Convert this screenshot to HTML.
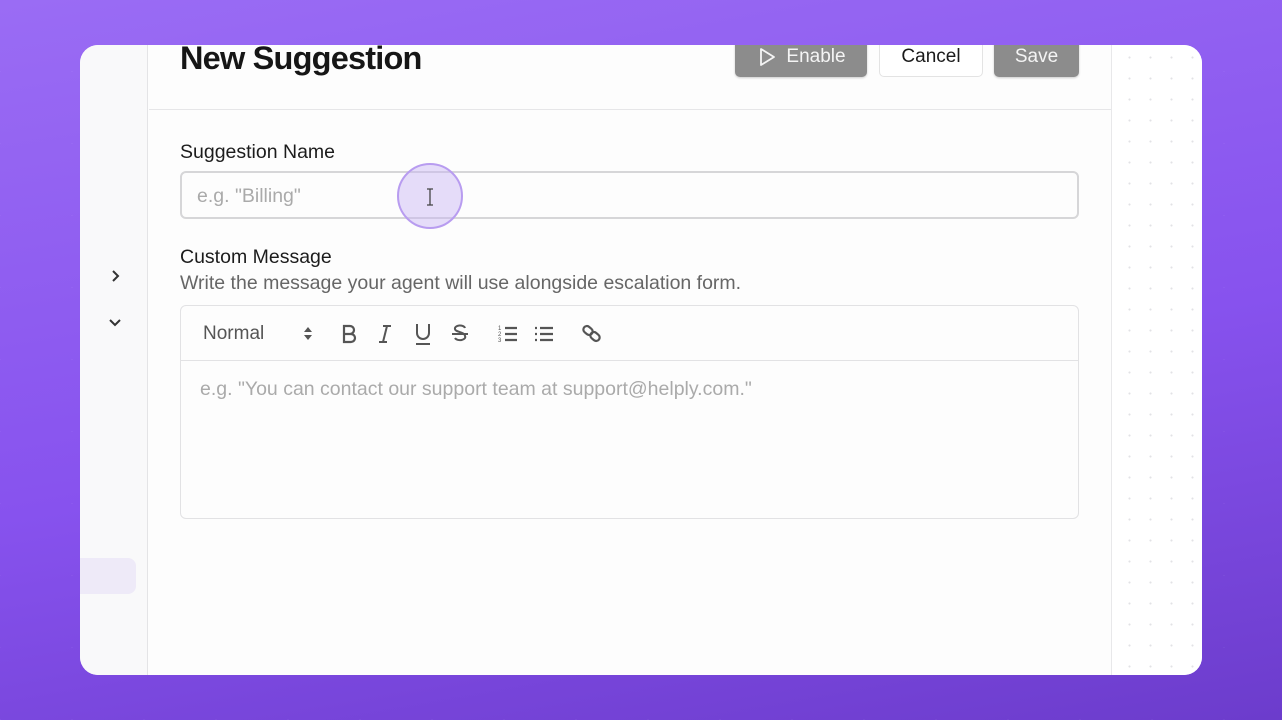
<!DOCTYPE html>
<html><head><style>
*{margin:0;padding:0;box-sizing:border-box}
body{width:1282px;height:720px;overflow:hidden;font-family:"Liberation Sans",sans-serif;
background:linear-gradient(170deg,#9a6cf4 0%,#8752ee 55%,#6c3ccc 100%);position:relative}
.pat{position:absolute;inset:0;background-image:linear-gradient(45deg,rgba(255,255,255,.05) 1px,transparent 1px),linear-gradient(-45deg,rgba(255,255,255,.05) 1px,transparent 1px);background-size:72px 72px;}
.card{position:absolute;left:80px;top:45px;width:1122px;height:630px;background:#fdfdfd;border-radius:18px;overflow:hidden}
.side{position:absolute;left:0;top:0;width:68px;height:630px;background:#f9f9fa;border-right:1px solid #e4e4e6}
.right{position:absolute;left:1031px;top:0;width:91px;height:630px;border-left:1px solid #e8e8ea;background-color:#fff;
background-image:radial-gradient(circle,#e2e2e5 0.9px,transparent 1.2px);background-size:21px 21px;background-position:7px 2px}
.hdr{position:absolute;left:69px;top:0;width:962px;height:65px;border-bottom:1px solid #e6e6e8}
h1{position:absolute;left:31px;top:-5px;font-size:32.5px;font-weight:bold;color:#161616;letter-spacing:-0.8px}
.btn{position:absolute;top:-8px;height:40px;border-radius:5px;font-size:19px;display:flex;align-items:center;justify-content:center}
.g{background:#8c8c8c;color:#f4f4f4;box-shadow:0 1px 2px rgba(0,0,0,.2)}
.w{background:#fff;border:1px solid #e3e3e3;color:#1a1a1a}
.lbl{position:absolute;left:100px;font-size:19.5px;color:#1c1c1c}
.inp{position:absolute;left:100px;top:126px;width:899px;height:48px;border:2px solid #d6d6d8;border-radius:6px;background:#fdfdfd;font-size:19.5px;color:#aaa;padding:12px 15px}
.ed{position:absolute;left:100px;top:260px;width:899px;height:214px;border:1px solid #e2e2e4;border-radius:6px}
.tb{height:55px;border-bottom:1px solid #e2e2e4;position:relative;color:#555}
.tb span{position:absolute;top:17px;font-size:19px}
</style></head><body><div class="pat"></div>
<div class="card">
<div class="side">
<svg style="position:absolute;left:30px;top:224px" width="12" height="14"><path d="M3 2l5 5-5 5" fill="none" stroke="#333" stroke-width="2"/></svg>
<svg style="position:absolute;left:28px;top:272px" width="14" height="12"><path d="M2 3l5 5 5-5" fill="none" stroke="#333" stroke-width="2"/></svg>
<div style="position:absolute;left:0;top:513px;width:56px;height:36px;background:#eeeaf8;border-radius:0 8px 8px 0"></div>
</div>
<div class="right"></div>
<div class="hdr">
<h1>New Suggestion</h1>
<div class="btn g" style="left:586px;width:132px"><svg width="22" height="22" style="margin-right:8px"><path d="M5 3l13 8-13 8z" fill="none" stroke="#f4f4f4" stroke-width="1.8" stroke-linejoin="round"/></svg>Enable</div>
<div class="btn w" style="left:730px;width:104px">Cancel</div>
<div class="btn g" style="left:845px;width:85px">Save</div>
</div>
<div class="lbl" style="top:96px">Suggestion Name</div>
<div class="inp">e.g. "Billing"</div>
<div class="lbl" style="top:201px">Custom Message</div>
<div class="lbl" style="top:227px;color:#666">Write the message your agent will use alongside escalation form.</div>
<div class="ed"><div class="tb">
<span style="left:22px">Normal</span>
<svg style="position:absolute;left:122px;top:20px" width="10" height="15"><path d="M1 6l4-5 4 5zM1 9l4 5 4-5z" fill="#555"/></svg>
<svg style="position:absolute;left:160px;top:18px" width="16" height="20"><path d="M3 2h6a4 4 0 010 8H3zM3 10h7a4 4 0 010 8H3z" fill="none" stroke="#555" stroke-width="2.2"/></svg>
<svg style="position:absolute;left:196px;top:18px" width="16" height="20"><path d="M6 2h8M2 18h8M10 2L6 18" fill="none" stroke="#555" stroke-width="2"/></svg>
<svg style="position:absolute;left:233px;top:16px" width="18" height="24"><path d="M3 2v9a6 6 0 0012 0V2M2 22h14" fill="none" stroke="#555" stroke-width="2"/></svg>
<svg style="position:absolute;left:270px;top:18px" width="18" height="20"><path d="M14 4a5 3 0 00-10 1c0 3 10 3 10 7a5 3 0 01-10 2M1 10h16" fill="none" stroke="#555" stroke-width="2"/></svg>
<svg style="position:absolute;left:317px;top:18px" width="20" height="20"><path d="M7 4h12M7 10h12M7 16h12" stroke="#555" stroke-width="2.2"/><text x="0" y="6" font-size="6" fill="#555">1</text><text x="0" y="12" font-size="6" fill="#555">2</text><text x="0" y="18" font-size="6" fill="#555">3</text></svg>
<svg style="position:absolute;left:353px;top:18px" width="20" height="20"><path d="M6 4h13M6 10h13M6 16h13" stroke="#555" stroke-width="2.2"/><path d="M1 4h2M1 10h2M1 16h2" stroke="#555" stroke-width="2.2"/></svg>
<svg style="position:absolute;left:400px;top:17px" width="22" height="22"><g fill="none" stroke="#555" stroke-width="2.2"><rect x="2" y="4" width="10" height="7" rx="3.5" transform="rotate(40 7 7.5)"/><rect x="9" y="10" width="10" height="7" rx="3.5" transform="rotate(40 14 13.5)"/></g></svg>
</div>
<div style="padding:17px 19px;font-size:19.5px;color:#aaa">e.g. "You can contact our support team at support@helply.com."</div>
</div>
<div style="position:absolute;left:317px;top:118px;width:66px;height:66px;border-radius:50%;background:rgba(200,180,245,.45);border:2px solid #b89cf0"></div>
<svg style="position:absolute;left:345px;top:143px" width="10" height="18"><path d="M2 1h6M2 17h6M5 1v16" stroke="#444" stroke-width="1.3" fill="none"/></svg>
</div>
</body></html>
